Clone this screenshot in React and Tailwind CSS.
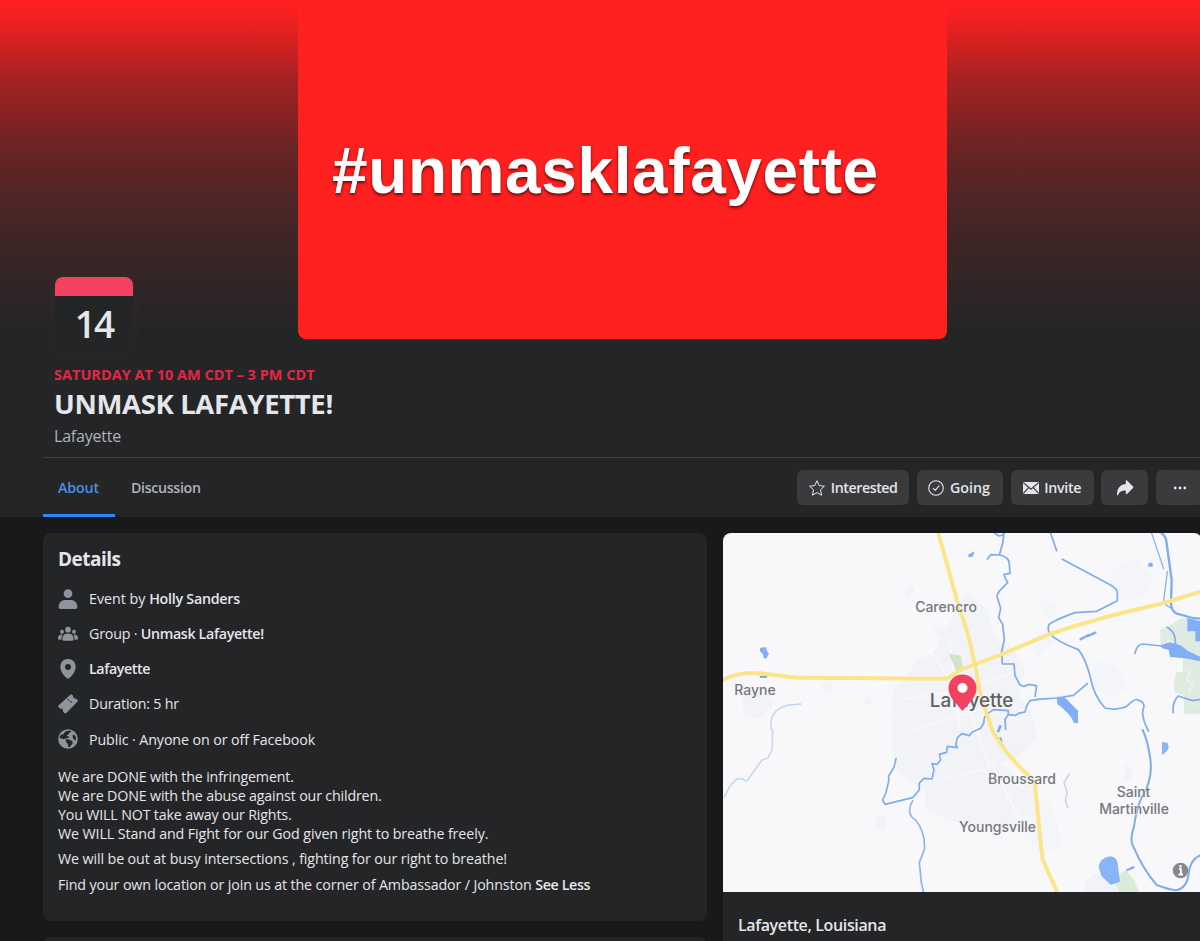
const InterestedIcon = () => (
  <svg className="h-4 w-4" viewBox="0 0 16 16" fill="none" stroke="#e4e6eb" strokeWidth="1" strokeLinejoin="round">
    <path d="M8 .7l2.2 4.9 5.2.6-3.9 3.6 1.1 5.4L8 12.6l-4.6 2.6 1.1-5.4L.6 6.2l5.2-.6z" />
  </svg>
);

const GoingIcon = () => (
  <svg className="h-4 w-4" viewBox="0 0 16 16" fill="none" stroke="#e4e6eb" strokeWidth="1.1" strokeLinecap="round" strokeLinejoin="round">
    <circle cx="8" cy="8" r="7.3" />
    <path d="M5.2 8.4l2 1.9 3.9-4.5" />
  </svg>
);

const InviteIcon = () => (
  <svg className="h-3.5 w-4" viewBox="0 0 16 14">
    <rect x="0" y="1" width="16" height="12" rx="1.2" fill="#e4e6eb" />
    <path d="M.4 1.6L8 8.2l7.6-6.6M.4 12.4l5.5-6M15.6 12.4l-5.5-6" fill="none" stroke="#3a3b3c" strokeWidth="1.2" />
  </svg>
);

const ShareIcon = () => (
  <svg className="h-4 w-[18px]" viewBox="0 0 18 16" fill="#e4e6eb">
    <path d="M9.8.9c0-.7.7-1 1.2-.5l6 6.2c.4.4.4.9 0 1.3l-6 6.2c-.5.5-1.2.2-1.2-.5v-3.1c-4 0-6.200 1.100-7.700 4.400-.3.7-1.100.6-1.100-.2C1 9.400 3.600 4.600 9.800 4.100z" />
  </svg>
);

const MoreIcon = () => (
  <svg className="h-4 w-4" viewBox="0 0 16 16" fill="#e4e6eb">
    <circle cx="3.200" cy="8" r="1.400" />
    <circle cx="8" cy="8" r="1.400" />
    <circle cx="12.800" cy="8" r="1.400" />
  </svg>
);

const PersonIcon = () => (
  <svg className="h-5 w-5" viewBox="0 0 60 60" fill="#8f939c">
    <circle cx="30" cy="14" r="13" />
    <path d="M2 54c0-14 9-21 20-21h16c11 0 20 7 20 21 0 4-2 6-5 6H7c-3 0-5-2-5-6z" />
  </svg>
);

const GroupIcon = () => (
  <svg className="h-5 w-5" viewBox="0 0 60 60" fill="#8f939c">
    <circle cx="30" cy="17" r="8.500" />
    <circle cx="12" cy="23" r="6" />
    <circle cx="48" cy="23" r="6" />
    <path d="M13 45c0-10 6-16 13-16h8c7 0 13 6 13 16 0 3-2 5-4 5H17c-2 0-4-2-4-5z" />
    <path d="M14 32c-3 4-4 9-4 15H4c-3 0-4-2-4-4 0-7 6-12 14-11zM46 32c3 4 4 9 4 15h6c3 0 4-2 4-4 0-7-6-12-14-11z" />
  </svg>
);

const PinIcon = () => (
  <svg className="h-5 w-5" viewBox="0 0 60 60" fill="#8f939c">
    <path fillRule="evenodd" d="M30 0c14 0 23 10 23 23 0 14-10 26-20 35-2 2-4 2-6 0C17 49 7 37 7 23 7 10 16 0 30 0zm0 15a9 9 0 100 18 9 9 0 000-18z" />
  </svg>
);

const TicketIcon = () => (
  <svg className="h-5 w-5" viewBox="0 0 60 60">
    <path
      fill="#8f939c"
      d="M37 2c1-2 4-2 5 0l3 3c-1 4 5 10 10 9l3 3c2 2 2 4 0 6L25 57c-2 2-4 2-6 0l-4-4c2-5-3-11-9-9l-4-4c-2-2-2-4 0-6z"
    />
    <path d="M29 16l4 3M37 22l4 3" stroke="#242526" strokeWidth="3" strokeLinecap="round" />
  </svg>
);

const GlobeIcon = () => (
  <svg className="h-5 w-5" viewBox="0 0 60 60">
    <circle cx="30" cy="30" r="29.500" fill="#8f939c" />
    <path
      fill="#242526"
      d="M27 6c5-2 12-1 13 1 0 4-7 3-8 7-1 4-7 3-6 7 2 2 6-1 7 3 0 3-5 3-8 4-3 1-6 3-9 2-4-1-7-3-11-2 0-5 2-9 5-12 3 1 5 1 7-1 2-4 5-8 10-9zM25 31c4-1 9 0 12 3 4 2 8 3 7 8-1 4-5 6-7 10-2 3-5 4-6 1-1-4-1-8-4-11-3-4-6-9-2-11zM46 17c4 0 7 5 8 10 0 4-1 7-3 7-3-1-4-5-6-8-2-3-2-8 1-9z"
    />
  </svg>
);

const ActionButton = ({ className, children }) => (
  <button className={"flex h-[35px] shrink-0 items-center rounded-md bg-[#3a3b3c] text-[14.25px] font-semibold text-[#e4e6eb] " + className}>
    {children}
  </button>
);

const Row = ({ icon, children }) => (
  <li className="flex h-5 items-center gap-[11px]">
    {icon}
    <span className="whitespace-pre">{children}</span>
  </li>
);

const AreaMap = () => (
  <svg className="block h-[359px] w-[479px]" viewBox="723 533 479 359" fill="none" strokeLinecap="round" strokeLinejoin="round">
    <rect x="723" y="533" width="479" height="359" fill="#f8f8fb" />

    {/* built-up areas */}
    <g fill="#f2f3f7">
      <path d="M893 690l14-14 10-16 16-6 14-26 10-22 10-14 20 18 8 26 20 16 10 20-6 24 12 16 6 24-18 20-20 8-20 26-24 8-30-8-28-18-6-30z" />
      <path d="M925 765l30-16 34 4 24 20 22 14 6 24-20 14-34 6-30-8-32-14z" />
      <path d="M1028 800l22 2 8 20 2 24-16 8-22-18z" opacity=".7" />
      <path d="M1112 570l24-12 16 16-4 20-24 8-16-16zM1095 660l22 6 10 22-16 10-20-12z" opacity=".7" />
      <path d="M742 695l24-4 8 12-16 16-14-4zM875 815l12 2-2 14-8-4zM1125 765l8 2-2 12-6 2zM1085 880l14-8 14 6 4 14h-32z" />
      <path d="M905 590l8-4 2 6-8 4zM933 630l10-4 4 8-8 4zM820 686l8-4 6 4-4 6zM862 700l6-4 6 8-6 2z" />
      <path d="M1040 600l14 4 4 10-12 6zM1030 640l16-10 8 12-16 14z" opacity=".7" />
    </g>
    <g stroke="#fbfbfd" strokeWidth="1.2">
      <path d="M900 700l60-10 60-20M930 650l40 60 20 60M910 730l70-20 40 10M940 780l40-10 50 20M950 640l10 90M990 760l30 60" />
    </g>

    {/* parks and wetland */}
    <path d="M948.500 653.500l12 2 3 13-7 3z" fill="#d0e5c8" />
    <path d="M1181 618h8v6h13v90h-18v-18l-10-4v-12l3-8h6v-24h-22l-1-18 12-6z" fill="#dfebe1" />
    <path d="M1112 878l14-8 8 10 5 12h-20z" fill="#d9ecd9" />
    <path d="M1186 670l4 4-3 6 6 4-4 8M1168 640l4 3M1190 700l5 5" stroke="#eaf3ea" strokeWidth="2" />

    {/* waterways, north east */}
    <g transform="translate(960 530) scale(.33333)" stroke="#7faceb" strokeWidth="5.200">
      <path d="M105 10q15 15 27 0l-4 30-10 35-26-1-10 13M118 75q30 5 30 28l2 27-18 3 4 12 7 13-20 20q-16 16-10 28l9 29-6 28 12 20 5 45-8 38 2 36h35l3 35 15 28 12 4 15-6 22 4v8l-4 24" />
      <path d="M272 10l18 52M307 88l135 72q32 16 30 30v22l-62 32-65 4q-70 26-78 36-6 14 3 28 20 22 85 47 20 24 35 78 10 60 45 97 40 8 65-5 25-24 30-20 28 6 20 28-8 20 15 66" />
      <path d="M232 508l60-4 48-8 42-35" />
      <path d="M575 10l36 106M622 125l-12 95 22 14" strokeWidth="3.600" />
      <path d="M605 10q14 10 15 30l15 110-2 70q0 20 15 30l50 14 24 2" strokeWidth="7" />
      <path d="M525 370q6-28 24-28l56 6M622 292q26 14 24 50l60 45M640 548q-4-30 14-50l44 14 24-4" />
      <path d="M362 328l22-12M384 318l22-10" strokeWidth="7" />
    </g>
    <g transform="translate(960 530) scale(.33333)" fill="#82aef5">
      <path d="M682 264l44 10v60h-20v-30h-24zM605 345l25-8 34 10 20 16 42 20v12l-50-10-46-4-4-22-20-4zM290 500l24 2 40 40v38l-12-2q-10-26-50-56zM24 74l20-10-6 16-12 2zM566 98h12v12h-14z" />
    </g>

    {/* bayou through the centre */}
    <g transform="translate(870 640) scale(.33333)" stroke="#7faceb" strokeWidth="5">
      <path d="M505 178l-25 4-10 16-5 18-20 4-8 6-22-2v-12l-45-3-20 14q-10 10-8 24l-10 18-26 12-8 10-22-6-14 12-4 22 4 8-30-4-2 18-22 6 4 16-10 14-16-2 6 18-6 28-24-2-14 14v20l-20 24-83 20-7-13 10-22 8-34 0-16 16-26 6-26" />
      <path d="M415 224l-10 14 2 30" />
      <path d="M392 256l-8 20M390 292l4 14" strokeWidth="8" strokeLinecap="butt" />
      <path d="M598 402l-16 26 10 30-6 24 8 22" stroke="#bdd0ee" strokeWidth="4" />
    </g>

    {/* waterways, north west */}
    <g transform="translate(720 530) scale(.33333)">
      <path d="M243 522l-40 4q-40 10-48 40-4 16-1 34" stroke="#c3d5f2" strokeWidth="4.500" />
      <path d="M120 353l18-1 4 14 5 4-8 16-8-2-2-12-9-8z" fill="#82aef5" />
      <path d="M122 440h17" stroke="#79a3b5" strokeWidth="6" />
    </g>

    {/* waterways, south west */}
    <g transform="translate(720 730) scale(.33333)">
      <path d="M158 0l-2 60-12 24-18 6-46 64-12-7-18-1-20 22-18 34" stroke="#c6d7f3" strokeWidth="4.500" />
      <path d="M578 212q-16 26-4 48 28 18 38 66l2 30-16 42 6 60 6 26" stroke="#8fb5ea" strokeWidth="5" />
    </g>

    {/* waterways, south east */}
    <g transform="translate(960 730) scale(.33333)">
      <path d="M548 0q14 30 20 70 16 70-22 130-18 40-24 90-14 44-2 60 30 70 70 115 50 18 62 15 30-8 34-50 4-40 34-54" stroke="#7faceb" strokeWidth="6" />
      <path d="M502 420l18-8" stroke="#82aef5" strokeWidth="7" />
      <path d="M606 36l16 2q8 16-2 26l-14 12zM416 410q4-26 34-31 24 2 24 30l6 46-28 10-28-28z" fill="#8ab4f8" />
    </g>

    {/* highways */}
    <g stroke="#fce588" strokeWidth="4">
      <path d="M723 680q13-7 27-7c25 0 34 4.700 50 4.700l147 1 13-8.700 40-15 50-21q50-17 110-30l40-12" />
      <path d="M938.300 533l21.700 78c7 16 15 50 19 76 4 20 10 32 13 43 11 20 28 38 36 45q7 4 7.500 14l4 42 3 28 14.500 33" />
    </g>

    {/* place names */}
    <g fill="#74777c" stroke="#f8f8fb" strokeWidth="1" paintOrder="stroke" textAnchor="middle" className="font-['Inter',sans-serif] text-[14px] font-medium">
      <text x="946" y="612">Carencro</text>
      <text x="755" y="695">Rayne</text>
      <text x="1022" y="783.500">Broussard</text>
      <text x="997.500" y="831.500">Youngsville</text>
      <text x="1133.500" y="797">Saint</text>
      <text x="1134" y="814">Martinville</text>
      <text x="971.500" y="707" fill="#5d6065" className="text-[18.900px]">Lafayette</text>
    </g>

    {/* event pin */}
    <path fill="#f3425f" d="M962.500 674.500c8 0 14 6 14 13.500 0 9-7 14.500-14 23-7-8.500-14-14-14-23 0-7.500 6-13.500 14-13.500z" />
    <circle cx="962.500" cy="688" r="5" fill="#fff" />

    {/* attribution */}
    <circle cx="1180.500" cy="870.500" r="7.800" fill="#85888d" />
    <path d="M1179 869h2v5M1178.500 874.500h4.500" stroke="#fff" strokeWidth="1.800" strokeLinecap="butt" />
    <circle cx="1180.500" cy="866.300" r="1.200" fill="#fff" />
  </svg>
);

export default function App() {
  return (
    <div className="h-[941px] w-full overflow-hidden bg-[#18191a] font-['Open_Sans','Noto_Sans',sans-serif] text-[#e4e6eb]">
      <header className="relative h-[517px] bg-[#242526]">
        <div className="flex h-[339px] bg-[linear-gradient(180deg,#ff2020_0px,#f42020_18px,#da2121_38px,#bc2222_60px,#a42222_80px,#912223_104px,#7c2324_128px,#672424_152px,#4f2526_200px,#3e2526_240px,#312526_285px,#242526_335px)] pl-[298px]">
          <div className="h-[339px] w-[649px] rounded-b-lg bg-[#ff2020] pt-[135px] pl-[34px] font-['Liberation_Sans',sans-serif] text-[64px] leading-[73px] font-bold tracking-[0.6px] text-white [text-shadow:0_2px_3px_rgba(60,0,0,0.75)]">
            #unmasklafayette
          </div>
        </div>

        <div className="absolute top-[277px] left-[55px] h-[78px] w-[78px] overflow-hidden rounded-lg bg-[#242526] shadow-[0_0_10px_rgba(70,60,60,0.3)]">
          <div className="h-[19px] bg-[#f3425f]" />
          <div className="pt-[3px] text-center text-[37px] leading-[50px] font-semibold tracking-[-2px]">14</div>
        </div>

        <div className="pt-[26px] pl-[54px] whitespace-nowrap">
          <p className="text-[14.5px] leading-5 font-bold text-[#e42645]">SATURDAY AT 10 AM CDT – 3 PM CDT</p>
          <h1 className="mt-px text-[27.5px] leading-9 font-bold tracking-[-0.35px]">UNMASK LAFAYETTE!</h1>
          <p className="mt-1 text-[16px] leading-5 tracking-[-0.2px] text-[#b0b3b8]">Lafayette</p>
        </div>

        <div className="mt-[11px] ml-[43px] flex h-[60px] justify-between border-t border-[#3e4042]">
          <nav className="flex text-[14.25px] leading-[59px] font-semibold text-[#b0b3b8]">
            <a className="h-[59px] w-[72px] border-b-[3px] border-[#2e89ff] pl-[15px] tracking-[-0.14px] text-[#4a90e8]">About</a>
            <a className="pl-4 tracking-[-0.35px]">Discussion</a>
          </nav>
          <div className="-mr-[3px] flex gap-[7.700px] pt-3">
            <ActionButton className="w-[112px] gap-[5.500px] pl-3 tracking-[-0.45px]"><InterestedIcon />Interested</ActionButton>
            <ActionButton className="w-[86px] gap-[6px] pl-[11px]"><GoingIcon />Going</ActionButton>
            <ActionButton className="w-[83px] gap-[5.500px] pl-3 tracking-[-0.3px]"><InviteIcon />Invite</ActionButton>
            <ActionButton className="w-[47px] justify-center"><ShareIcon /></ActionButton>
            <ActionButton className="w-[47px] justify-center"><MoreIcon /></ActionButton>
          </div>
        </div>
      </header>

      <main className="flex gap-4 pt-4 pl-[43px]">
        <div className="w-[664px] shrink-0">
          <section className="h-[388px] rounded-lg bg-[#242526] px-[15px] pt-[14px] text-[14.25px]">
            <h2 className="text-[19px] leading-6 font-bold tracking-[-0.5px]">Details</h2>
            <ul className="mt-[17.500px] flex flex-col gap-[15.200px]">
              <Row icon={<PersonIcon />}>Event by <b className="font-semibold tracking-[-0.25px]">Holly Sanders</b></Row>
              <Row icon={<GroupIcon />}><span className="tracking-[-0.2px]">Group · </span><b className="font-semibold tracking-[-0.35px]">Unmask Lafayette!</b></Row>
              <Row icon={<PinIcon />}><b className="font-semibold tracking-[-0.42px]">Lafayette</b></Row>
              <Row icon={<TicketIcon />}><span className="tracking-[-0.2px]">Duration: 5 hr</span></Row>
              <Row icon={<GlobeIcon />}><span className="tracking-[-0.1px]">Public · Anyone on or off Facebook</span></Row>
            </ul>
            <p className="mt-[19px] leading-[18.750px] tracking-[-0.17px]">
              We are DONE with the infringement.<br />
              We are DONE with the abuse against our children.<br />
              You WILL NOT take away our Rights.<br />
              <span className="tracking-[-0.1px]">We WILL Stand and Fight for our God given right to breathe freely.</span>
            </p>
            <p className="mt-[7px] leading-[18.750px] tracking-[-0.11px]">We will be out at busy intersections , fighting for our right to breathe!</p>
            <p className="mt-[6.500px] leading-[18.750px] tracking-[-0.12px]">
              Find your own location or join us at the corner of Ambassador / Johnston <b className="font-semibold tracking-[-0.35px]">See Less</b>
            </p>
          </section>
          <section className="mt-4 h-10 rounded-lg bg-[#242526]" />
        </div>
        <aside className="h-[450px] w-[479px] shrink-0 overflow-hidden rounded-lg bg-[#242526]">
          <AreaMap />
          <h2 className="pt-[21px] pl-[15px] text-[16px] leading-6 font-semibold tracking-[-0.36px]">Lafayette, Louisiana</h2>
        </aside>
      </main>
    </div>
  );
}
